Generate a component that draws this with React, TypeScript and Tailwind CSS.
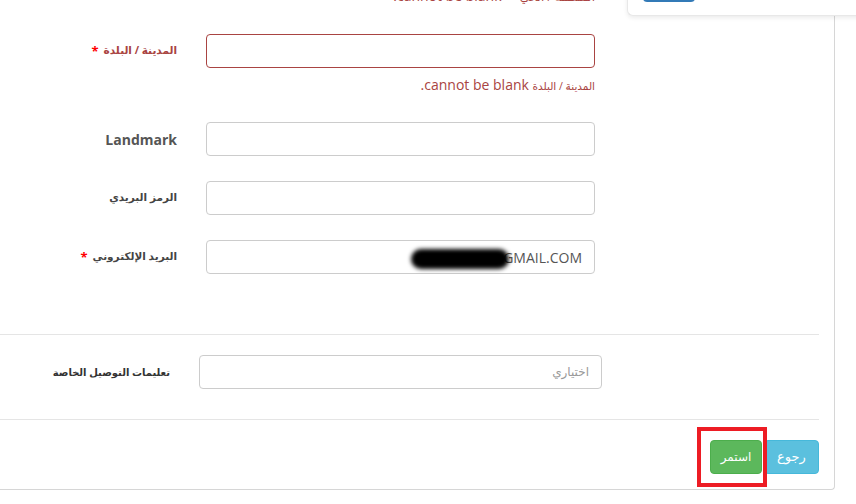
import React from "react";

const font = { fontFamily: '"Open Sans", "DejaVu Sans", sans-serif' };

function Label({ text, required, red }: { text: string; required?: boolean; red?: boolean }) {
  return (
    <div className="w-[177px] flex justify-end items-center gap-[5px] shrink-0">
      {required && <span className="text-[#ff0000] text-[13px] font-bold leading-none">*</span>}
      <span
        dir="rtl"
        className={`text-[10.5px] font-bold ${red ? "text-[#a94442]" : "text-[#444]"}`}
      >
        {text}
      </span>
    </div>
  );
}

function Input({ error, children }: { error?: boolean; children?: React.ReactNode }) {
  return (
    <div
      className={`relative ml-[29px] w-[389px] h-[34px] rounded-[4px] border bg-white ${
        error ? "border-[#a94442]" : "border-[#ccc]"
      } flex items-center justify-end px-[12px] shrink-0`}
    >
      {children}
    </div>
  );
}

export default function App() {
  return (
    <div className="relative w-[856px] h-[504px] overflow-hidden bg-white" style={font}>
      <div className="w-[835px] border-r border-b border-[#d6d6d6] rounded-br-[4px] pr-[15px] pb-[15px] flex flex-col">
        {/* cut-off previous error */}
        <div
          dir="rtl"
          className="mt-[-14px] h-[20px] w-[595px] text-right text-[14px] leading-[20px] text-[#a94442]"
        >
          <span className="text-[12px]">المنطقة  / الحي</span>&nbsp;&nbsp;&nbsp;&nbsp; cannot be blank.
        </div>

        {/* city */}
        <div className="mt-[28px] flex items-center">
          <Label text="المدينة / البلدة" required red />
          <Input error />
        </div>
        <div
          dir="rtl"
          className="mt-[7px] h-[20px] w-[595px] text-right text-[14px] leading-[20px] text-[#a94442]"
        >
          <span className="text-[10.5px]">المدينة / البلدة</span> cannot be blank.
        </div>

        {/* landmark */}
        <div className="mt-[27px] flex items-center">
          <div className="w-[177px] text-right text-[14px] font-bold text-[#555] shrink-0">Landmark</div>
          <Input />
        </div>

        {/* postal */}
        <div className="mt-[25px] flex items-center">
          <Label text="الرمز البريدي" />
          <Input />
        </div>

        {/* email */}
        <div className="mt-[25px] flex items-center">
          <Label text="البريد الإلكتروني" required />
          <Input>
            <span className="text-[14px] text-[#555]">GMAIL.COM</span>
            <div className="absolute left-[204px] top-[8px] w-[98px] h-[20px] rounded-full bg-black blur-[2px]" />
          </Input>
        </div>

        <div className="mt-[60px] h-px bg-[#e5e5e5]" />

        {/* special instructions */}
        <div className="mt-[20px] flex items-center">
          <div className="w-[170px] flex justify-end shrink-0">
            <span dir="rtl" className="text-[10px] font-bold text-[#333]">تعليمات التوصيل الخاصة</span>
          </div>
          <div className="ml-[29px] w-[403px] h-[34px] rounded-[4px] border border-[#ccc] flex items-center justify-end px-[12px]">
            <span dir="rtl" className="text-[12px] text-[#999]">اختياري</span>
          </div>
        </div>

        <div className="mt-[30px] h-px bg-[#e5e5e5]" />

        {/* buttons */}
        <div className="mt-[20px] flex justify-end items-center gap-[2px]">
          <button className="h-[34px] w-[52px] rounded-[4px] bg-[#5cb85c] border border-[#4cae4c] text-white text-[12px]">
            <span dir="rtl">استمر</span>
          </button>
          <button className="h-[34px] w-[55px] rounded-[4px] bg-[#5bc0de] border border-[#46b8da] text-white text-[13px]">
            <span dir="rtl">رجوع</span>
          </button>
        </div>
      </div>

      {/* highlight annotation */}
      <div className="absolute left-[697px] top-[427px] w-[70px] h-[60px] border-[4px] border-[#ed1c24]" />

      {/* floating card top-right */}
      <div className="absolute left-[627px] top-[-10px] w-[250px] h-[26px] bg-white rounded-bl-[6px] border-l border-b border-[#e8e8e8] shadow-[0_2px_4px_rgba(0,0,0,0.08)]">
        <div className="absolute left-[15px] top-[-8px] w-[52px] h-[20px] rounded-[4px] bg-[#337ab7]" />
      </div>
    </div>
  );
}
